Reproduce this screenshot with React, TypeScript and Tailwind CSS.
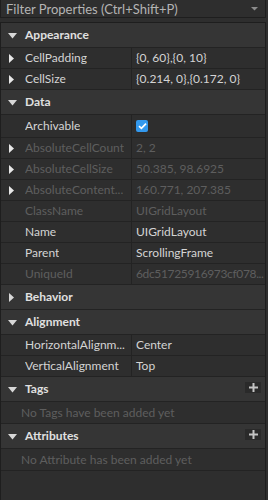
import type { ReactNode } from "react";

type Prop = {
  name: string;
  value?: ReactNode;
  arrow?: boolean;
  dim?: boolean;
  tall?: boolean;
  tight?: boolean;
};

type Section = {
  title: string;
  open: boolean;
  add?: boolean;
  props?: Prop[];
  empty?: string;
};

const sections: Section[] = [
  {
    title: "Appearance",
    open: true,
    props: [
      { name: "CellPadding", value: "{0, 60},{0, 10}", arrow: true },
      { name: "CellSize", value: "{0.214, 0},{0.172, 0}", arrow: true },
    ],
  },
  {
    title: "Data",
    open: true,
    props: [
      { name: "Archivable", value: <Check />, tall: true },
      { name: "AbsoluteCellCount", value: "2, 2", arrow: true, dim: true },
      { name: "AbsoluteCellSize", value: "50.385, 98.6925", arrow: true, dim: true },
      { name: "AbsoluteContent...", value: "160.771, 207.385", arrow: true, dim: true },
      { name: "ClassName", value: "UIGridLayout", dim: true },
      { name: "Name", value: "UIGridLayout" },
      { name: "Parent", value: "ScrollingFrame" },
      { name: "UniqueId", value: "6dc51725916973cf078...", dim: true, tight: true },
    ],
  },
  { title: "Behavior", open: false },
  {
    title: "Alignment",
    open: true,
    props: [
      { name: "HorizontalAlignm...", value: "Center" },
      { name: "VerticalAlignment", value: "Top" },
    ],
  },
  { title: "Tags", open: true, add: true, empty: "No Tags have been added yet" },
  { title: "Attributes", open: true, add: true, empty: "No Attribute has been added yet" },
];

function Check() {
  return (
    <span className="flex h-[12px] w-[12px] items-center justify-center rounded-[2px] bg-[#3399ee]">
      <svg width="9" height="8" viewBox="0 0 9 8">
        <path d="M1 4.2 L3.4 6.4 L8 1.6" fill="none" stroke="#fff" strokeWidth="1.7" />
      </svg>
    </span>
  );
}

function Caret({ open, white }: { open: boolean; white?: boolean }) {
  const c = white ? "#e8e8e8" : "#d8d8d8";
  return open ? (
    <svg width="9" height="6" viewBox="0 0 9 6">
      <path d="M0 0 H9 L4.5 5.5 Z" fill={c} />
    </svg>
  ) : (
    <svg width="5" height="9" viewBox="0 0 5 9">
      <path d="M0 0 V9 L5 4.5 Z" fill={c} />
    </svg>
  );
}

function PropRow({ p }: { p: Prop }) {
  const text = p.dim ? "text-[#5e5e5e]" : "text-[#d4d4d4]";
  return (
    <div className={`flex border-b border-[#232323] ${p.tall ? "h-[23px]" : "h-[21px]"}`}>
      <div className={`relative flex w-[131px] items-center border-r border-[#232323] pl-[24px] pr-[2px] ${text}`}>
        {p.arrow && (
          <span className="absolute left-[8px] top-[6px] flex">
            <Caret open={false} white />
          </span>
        )}
        <span className="truncate leading-[18px]">{p.name}</span>
      </div>
      <div className={`flex min-w-0 flex-1 items-center pl-[4px] ${text}`}>
        <span className={`whitespace-nowrap leading-[18px] ${p.tight ? "tracking-[-0.35px]" : ""}`}>{p.value}</span>
      </div>
    </div>
  );
}

function Header({ s }: { s: Section }) {
  return (
    <div className="relative flex h-[25px] items-center border-b border-[#232323] bg-[#353535] pl-[24px] font-bold leading-[18px] text-[#e0e0e0]">
      <span className={`absolute flex ${s.open ? "left-[7px] top-[10px]" : "left-[8px] top-[8px]"}`}>
        <Caret open={s.open} />
      </span>
      {s.title}
      {s.add && (
        <span className="absolute right-[4px] top-[5px] flex h-[11px] w-[16px] items-center justify-center bg-[#2a2a2a]">
          <svg width="9" height="9" viewBox="0 0 9 9">
            <path d="M4.5 0 V9 M0 4.5 H9" stroke="#c4c4c4" strokeWidth="2" />
          </svg>
        </span>
      )}
    </div>
  );
}

export default function App() {
  return (
    <div
      className="flex h-[500px] w-[268px] flex-col bg-[#2e2e2e] text-[12px]"
      style={{ fontFamily: "Lato, 'Open Sans', sans-serif" }}
    >
      <div className="flex h-[18px] w-[266px] shrink-0 items-center justify-between border border-t-0 border-[#1e1e1e] pl-[5px] pr-[7px] text-[13px] leading-[16px] text-[#b4b4b4]">
        <span>Filter Properties (Ctrl+Shift+P)</span>
        <svg width="7" height="4" viewBox="0 0 7 4">
          <path d="M0 0 H7 L3.5 3.5 Z" fill="#8c8c8c" />
        </svg>
      </div>
      <div className="mt-[4px] flex w-[266px] flex-1 flex-col border border-b-0 border-[#1e1e1e]">
        {sections.map((s) => (
          <div key={s.title}>
            <Header s={s} />
            {s.open && s.props?.map((p) => <PropRow key={p.name} p={p} />)}
            {s.open && s.empty && (
              <div className="flex h-[22px] items-center border-b border-[#232323] pl-[20px] leading-[18px] text-[#5e5e5e]">
                {s.empty}
              </div>
            )}
          </div>
        ))}
      </div>
    </div>
  );
}
